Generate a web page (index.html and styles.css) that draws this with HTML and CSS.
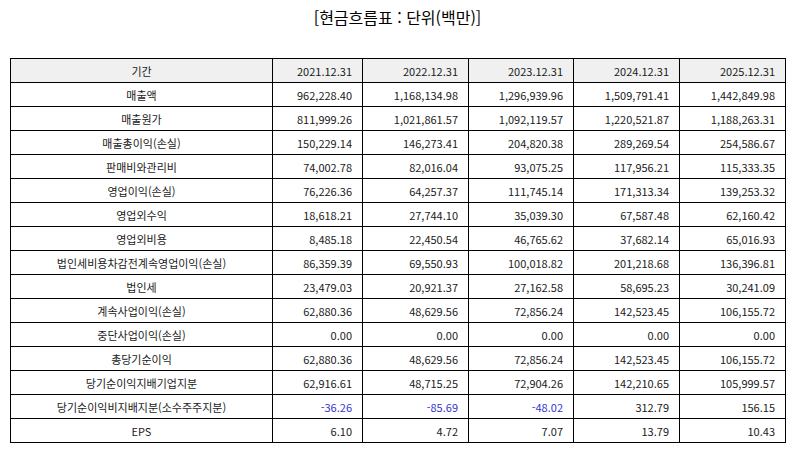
FILE: index.html
```html
<!DOCTYPE html>
<html lang="ko">
<head>
<meta charset="utf-8">
<link rel="stylesheet" href="styles.css">
</head>
<body>
<div class="page">
  <h1 class="title">[현금흐름표 : 단위(백만)]</h1>
  <table class="fin">
    <colgroup>
      <col class="c-label"><col class="c-narrow"><col class="c-num"><col class="c-num2"><col class="c-num"><col class="c-num">
    </colgroup>
    <thead>
      <tr><th class="label">기간</th><th>2021.12.31</th><th>2022.12.31</th><th>2023.12.31</th><th>2024.12.31</th><th>2025.12.31</th></tr>
    </thead>
    <tbody>
      <tr><td class="label">매출액</td><td>962,228.40</td><td>1,168,134.98</td><td>1,296,939.96</td><td>1,509,791.41</td><td>1,442,849.98</td></tr>
      <tr><td class="label">매출원가</td><td>811,999.26</td><td>1,021,861.57</td><td>1,092,119.57</td><td>1,220,521.87</td><td>1,188,263.31</td></tr>
      <tr><td class="label">매출총이익(손실)</td><td>150,229.14</td><td>146,273.41</td><td>204,820.38</td><td>289,269.54</td><td>254,586.67</td></tr>
      <tr><td class="label">판매비와관리비</td><td>74,002.78</td><td>82,016.04</td><td>93,075.25</td><td>117,956.21</td><td>115,333.35</td></tr>
      <tr><td class="label">영업이익(손실)</td><td>76,226.36</td><td>64,257.37</td><td>111,745.14</td><td>171,313.34</td><td>139,253.32</td></tr>
      <tr><td class="label">영업외수익</td><td>18,618.21</td><td>27,744.10</td><td>35,039.30</td><td>67,587.48</td><td>62,160.42</td></tr>
      <tr><td class="label">영업외비용</td><td>8,485.18</td><td>22,450.54</td><td>46,765.62</td><td>37,682.14</td><td>65,016.93</td></tr>
      <tr><td class="label">법인세비용차감전계속영업이익(손실)</td><td>86,359.39</td><td>69,550.93</td><td>100,018.82</td><td>201,218.68</td><td>136,396.81</td></tr>
      <tr><td class="label">법인세</td><td>23,479.03</td><td>20,921.37</td><td>27,162.58</td><td>58,695.23</td><td>30,241.09</td></tr>
      <tr><td class="label">계속사업이익(손실)</td><td>62,880.36</td><td>48,629.56</td><td>72,856.24</td><td>142,523.45</td><td>106,155.72</td></tr>
      <tr><td class="label">중단사업이익(손실)</td><td>0.00</td><td>0.00</td><td>0.00</td><td>0.00</td><td>0.00</td></tr>
      <tr><td class="label">총당기순이익</td><td>62,880.36</td><td>48,629.56</td><td>72,856.24</td><td>142,523.45</td><td>106,155.72</td></tr>
      <tr><td class="label">당기순이익지배기업지분</td><td>62,916.61</td><td>48,715.25</td><td>72,904.26</td><td>142,210.65</td><td>105,999.57</td></tr>
      <tr><td class="label">당기순이익비지배지분(소수주주지분)</td><td class="neg">-36.26</td><td class="neg">-85.69</td><td class="neg">-48.02</td><td>312.79</td><td>156.15</td></tr>
      <tr><td class="label">EPS</td><td>6.10</td><td>4.72</td><td>7.07</td><td>13.79</td><td>10.43</td></tr>
    </tbody>
  </table>
</div>
</body>
</html>
```

FILE: styles.css
```css
html, body {
  margin: 0;
  padding: 0;
  background: #ffffff;
}

.page {
  padding: 6px 9px 0 10px;
  font-family: "Noto Sans CJK KR", "Noto Sans", sans-serif;
  color: #1a1a1a;
}

.title {
  margin: 0;
  font-size: 16px;
  font-weight: normal;
  line-height: 22px;
  text-align: center;
  color: #000000;
}

.fin {
  margin-top: 30px;
  width: 775px;
  border-collapse: collapse;
  table-layout: fixed;
  font-size: 11px;
}

.c-label { width: 262px; }
.c-narrow { width: 90px; }
.c-num { width: 106px; }
.c-num2 { width: 105px; }

.fin th,
.fin td {
  border: 1px solid #000000;
  height: 23px;
  padding: 0 10px 0 4px;
  text-align: right;
  font-weight: normal;
  white-space: nowrap;
  line-height: 14px;
}

.fin thead th {
  background: #f0f0f0;
}

.fin .label {
  text-align: center;
  padding: 0 4px;
}

.fin .neg {
  color: #3434d0;
}
```
